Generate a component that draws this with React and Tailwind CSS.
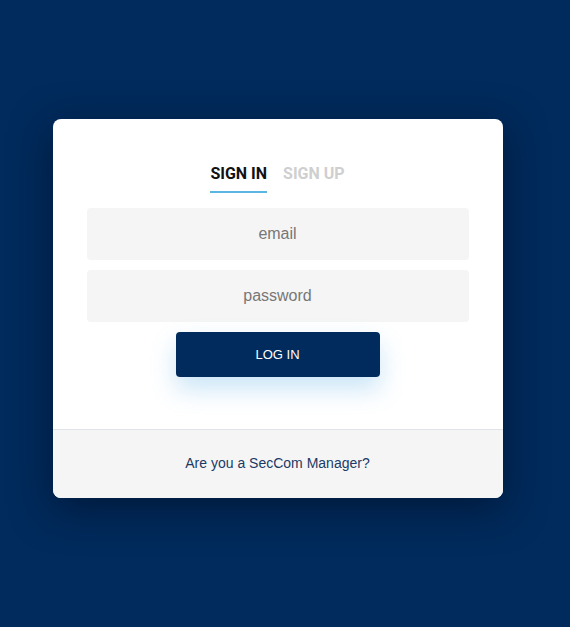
export default function App() {
  return (
    <div className="min-h-screen w-full bg-[#002b5c] flex justify-center pt-[119px] pr-[15px]" style={{ fontFamily: "'Liberation Sans', Arial, sans-serif" }}>
      <div className="w-[450px] h-[379px] bg-white rounded-lg overflow-hidden shadow-[0_10px_40px_rgba(0,10,30,0.55)] flex flex-col">
        <div className="flex-1 flex flex-col items-center pt-[43px] px-[34px]">
          <div className="flex gap-4 font-['Roboto',sans-serif] font-bold text-[16px] leading-6">
            <div className="text-[#111] border-b-2 border-[#5bb6e3] pb-[5px]">SIGN IN</div>
            <div className="text-[#cfcfcf] pb-[5px]">SIGN UP</div>
          </div>
          <div className="w-full mt-[15px] flex flex-col gap-[10px]">
            <input
              placeholder="email"
              className="w-full h-[52px] bg-[#f5f5f5] rounded text-center text-[16px] placeholder-[#777] outline-none"
            />
            <input
              type="password"
              placeholder="password"
              className="w-full h-[52px] bg-[#f5f5f5] rounded text-center text-[16px] placeholder-[#777] outline-none"
            />
          </div>
          <button className="mt-[10px] w-[204px] h-[45px] bg-[#002b5c] text-white text-[13px] rounded shadow-[0_12px_24px_rgba(80,170,230,0.3)]">
            LOG IN
          </button>
        </div>
        <div className="h-[69px] border-t border-[#e0e4ea] bg-[#f5f5f5] flex items-center justify-center text-[14px] text-[#1b3a66] pb-px">
          Are you a SecCom Manager?
        </div>
      </div>
    </div>
  );
}
